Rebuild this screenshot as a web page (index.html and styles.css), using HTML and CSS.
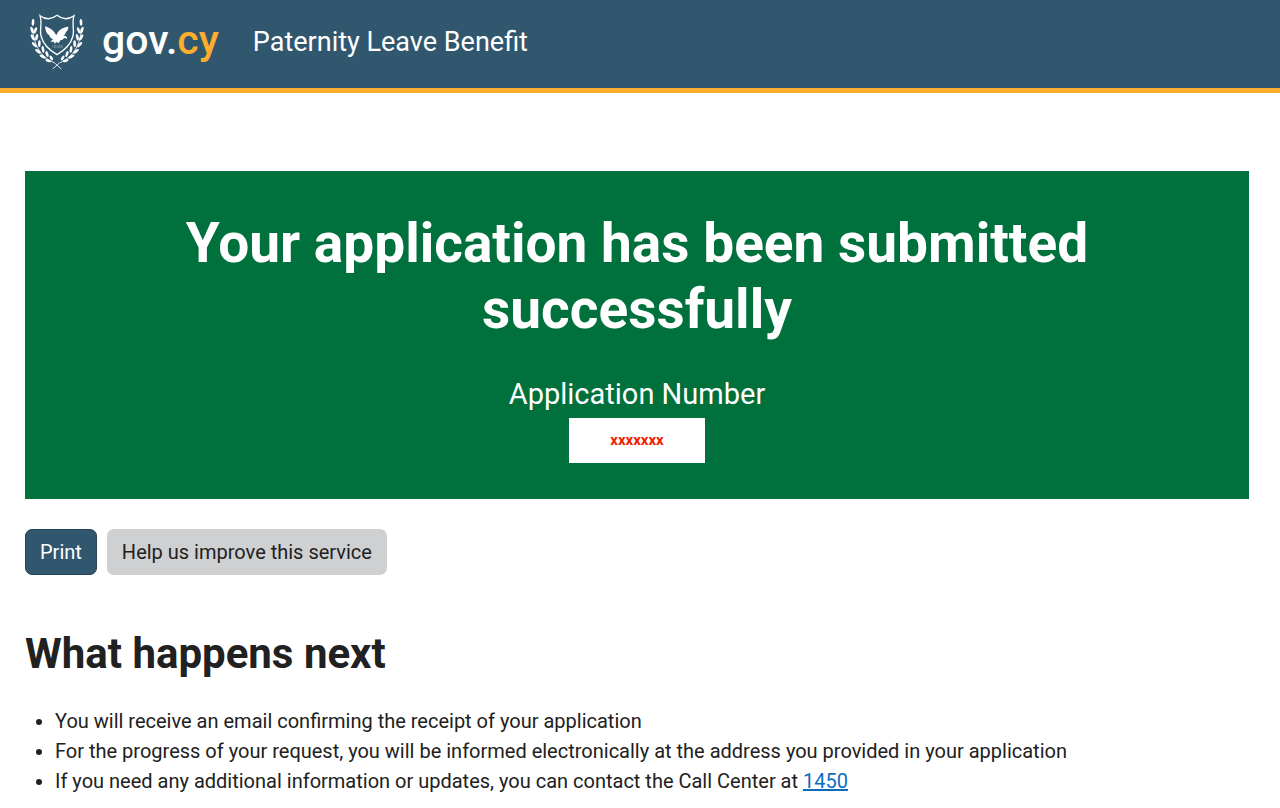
FILE: index.html
```
<!DOCTYPE html>
<html lang="en">
<head>
<meta charset="utf-8">
<meta name="viewport" content="width=device-width, initial-scale=1">
<title>Paternity Leave Benefit</title>
<link rel="stylesheet" href="styles.css">
</head>
<body>
<header class="header">
<svg class="emblem" viewBox="30 24 162 174" aria-hidden="true">
<defs>
<g id="branch">
<path d="M124 192L104 174C70 160 42 130 38 70" fill="none" stroke="#fff" stroke-width="2.5"/>
<g fill="#fff">
<ellipse cx="39" cy="52" rx="4" ry="10" transform="rotate(4 39 52)"/>
<ellipse cx="36" cy="75" rx="4" ry="10" transform="rotate(-18 36 75)"/>
<ellipse cx="46" cy="76" rx="4" ry="10" transform="rotate(20 46 76)"/>
<ellipse cx="38" cy="97" rx="4" ry="10" transform="rotate(-28 38 97)"/>
<ellipse cx="50" cy="97" rx="4" ry="10" transform="rotate(12 50 97)"/>
<ellipse cx="43" cy="119" rx="4" ry="10" transform="rotate(-42 43 119)"/>
<ellipse cx="58" cy="116" rx="4" ry="10" transform="rotate(2 58 116)"/>
<ellipse cx="54" cy="139" rx="4" ry="10" transform="rotate(-54 54 139)"/>
<ellipse cx="69" cy="133" rx="4" ry="10" transform="rotate(-8 69 133)"/>
<ellipse cx="68" cy="155" rx="4" ry="10" transform="rotate(-62 68 155)"/>
<ellipse cx="81" cy="147" rx="4" ry="9" transform="rotate(-20 81 147)"/>
<ellipse cx="85" cy="167" rx="4" ry="9" transform="rotate(-72 85 167)"/>
<ellipse cx="94" cy="159" rx="4" ry="8" transform="rotate(-34 94 159)"/>
</g>
</g>
</defs>
<use href="#branch"/>
<use href="#branch" transform="matrix(-1 0 0 1 222 0)"/>
<path d="M60 32C78 45 96 43 111 31C126 43 144 45 162 32C154 58 165 76 158 96C150 124 130 138 111 149C92 138 72 124 64 96C57 76 68 58 60 32Z" fill="#31576f" stroke="#fff" stroke-width="4"/>
<path fill="#fff" d="M75 64C88 68 101 75 109 91C114 76 126 67 145 65C145 73 141 79 137 82C138 86 134 90 130 92L137 93Q143 96 141 101L133 99Q128 106 121 106L116 115L110 111L103 116L102 110L91 110L99 103C92 100 88 95 88 91C80 87 76 77 75 64Z"/>
<path d="M98 121V128M103 121H108V128H103ZM113 121H118V128H113ZM122 121H127V128H122Z" fill="none" stroke="#c9d5dc" stroke-width="1"/>
</svg>
<span class="brand">gov.<span class="brand-cy">cy</span></span>
<span class="service">Paternity Leave Benefit</span>
</header>
<main class="main">
<section class="panel">
<h1 class="panel-title">Your application has been submitted successfully</h1>
<p class="panel-label">Application Number</p>
<p class="panel-number">xxxxxxx</p>
</section>
<div class="actions">
<button type="button" class="btn btn-primary">Print</button>
<button type="button" class="btn btn-secondary">Help us improve this service</button>
</div>
<h2 class="heading">What happens next</h2>
<ul class="list">
<li>You will receive an email confirming the receipt of your application</li>
<li>For the progress of your request, you will be informed electronically at the address you provided in your application</li>
<li>If you need any additional information or updates, you can contact the Call Center at <a class="link" href="tel:1450">1450</a></li>
</ul>
</main>
</body>
</html>
```

FILE: styles.css
```
* { box-sizing: border-box; }
body { margin: 0; background: #fff; color: #212121; font-family: Roboto, sans-serif; font-size: 20px; line-height: 30px; }
.header { display: flex; align-items: center; height: 93px; padding: 0 30px 4px; background: #31576f; border-bottom: 5px solid #ffad2d; color: #fff; }
.emblem { width: 54px; height: 58px; margin-right: 18px; }
.brand { font-size: 41px; font-weight: 500; line-height: 46px; margin-right: 34px; padding-bottom: 4px; }
.brand-cy { color: #ffad2d; }
.service { font-size: 27px; line-height: 36px; }
.main { padding: 78px 31px 12px 25px; }
.panel { padding: 39px 120px 36px; background: #00703c; color: #fff; text-align: center; }
.panel-title { margin: 0 0 30px; font-size: 55px; line-height: 66px; font-weight: 700; }
.panel-label { margin: 0; font-size: 29px; line-height: 44px; }
.panel-number { width: 136px; margin: 2px auto 0; padding: 7px 0 8px; background: #fff; color: #f32100; font-size: 15px; font-weight: 700; }
.actions { display: flex; gap: 10px; margin-top: 30px; }
.btn { padding: 7px 14px; border: 1px solid transparent; border-radius: 7px; font-family: inherit; font-size: 20px; line-height: 30px; }
.btn-primary { background: #31576f; border-color: #264457; color: #fff; }
.btn-secondary { background: #cfd0d2; color: #212121; }
.heading { margin: 54px 0 27px; font-size: 42px; line-height: 50px; font-weight: 700; }
.list { margin: 0; padding-left: 30px; }
.link { color: #0b6cbf; }
```
